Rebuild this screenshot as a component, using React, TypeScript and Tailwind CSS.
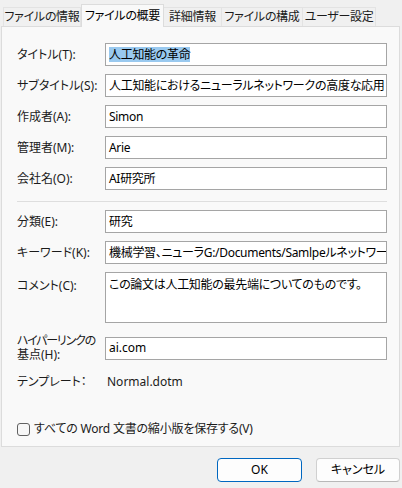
import React from "react";

const tabs = [
  { label: "ファイルの情報", w: "w-[78px]" },
  { label: "ファイルの概要", w: "w-[83px]", active: true },
  { label: "詳細情報", w: "w-[58px]" },
  { label: "ファイルの構成", w: "w-[81px]" },
  { label: "ユーザー設定", w: "w-[73px]" },
];

function Field({
  label,
  value,
  selected,
}: {
  label: string;
  value: string;
  selected?: boolean;
}) {
  return (
    <div className="grid grid-cols-[88px_282px] items-center">
      <div className="whitespace-nowrap text-[12px] leading-[16px] text-[#1b1b1b]">{label}</div>
      <div className="flex h-[23px] items-center overflow-hidden whitespace-nowrap border border-[#a5a5a5] bg-white px-[3px] text-[12px] tracking-[-0.3px] text-black">
        {selected ? (
          <span className="bg-[#99c9ef] leading-[15px]">{value}</span>
        ) : (
          <span className="leading-[16px]">{value}</span>
        )}
      </div>
    </div>
  );
}

export default function App() {
  return (
    <div className="h-[488px] w-[402px] overflow-hidden bg-[#f0f0f0] font-['Noto_Sans','Noto_Sans_CJK_JP',sans-serif] [font-feature-settings:'palt']">
      {/* tabs */}
      <div className="flex h-[26px] items-end pl-[3px]">
        {tabs.map((t) =>
          t.active ? (
            <div
              key={t.label}
              className={`${t.w} relative z-10 -mb-px flex h-[23px] items-center justify-center whitespace-nowrap border border-b-0 border-[#dcdcdc] bg-[#f9f9f9] text-[12px] tracking-[-0.3px] text-black`}
            >
              {t.label}
            </div>
          ) : (
            <div
              key={t.label}
              className={`${t.w} flex h-[19px] items-center justify-center whitespace-nowrap border border-b-0 border-l-0 border-[#e3e3e3] bg-[#f0f0f0] text-[12px] tracking-[-0.3px] text-[#1b1b1b] first:border-l`}
            >
              {t.label}
            </div>
          ),
        )}
      </div>

      {/* panel */}
      <div className="ml-px mr-[2px] box-border flex h-[421px] flex-col border border-[#dcdcdc] bg-[#f9f9f9] pl-[15px] pt-[16px]">
        <div className="flex flex-col gap-[8px]">
          <Field label="タイトル(T):" value="人工知能の革命" selected />
          <Field label="サブタイトル(S):" value="人工知能におけるニューラルネットワークの高度な応用と将来" />
          <Field label="作成者(A):" value="Simon" />
          <Field label="管理者(M):" value="Arie" />
          <Field label="会社名(O):" value="AI研究所" />
        </div>

        <div className="mt-[11px] h-px w-[370px] bg-[#dedede]" />

        <div className="mt-[8px] flex flex-col gap-[8px]">
          <Field label="分類(E):" value="研究" />
          <Field label="キーワード(K):" value="機械学習、ニューラG:/Documents/Samlpeルネットワーク" />
          <div className="grid grid-cols-[88px_282px] items-start">
            <div className="pt-[6px] text-[12px] leading-[16px] text-[#1b1b1b]">コメント(C):</div>
            <div className="h-[51px] overflow-hidden border border-[#a5a5a5] bg-white px-[3px] pt-[4px] text-[12px] leading-[16px] tracking-[-0.3px] text-black">
              この論文は人工知能の最先端についてのものです。
            </div>
          </div>
        </div>

        <div className="mt-[11px] grid grid-cols-[88px_282px] items-center">
          <div className="flex flex-col text-[12px] leading-[14px] text-[#1b1b1b]">
            <span className="whitespace-nowrap tracking-[-1.2px]">ハイパーリンクの</span>
            <span className="whitespace-nowrap">基点(H):</span>
          </div>
          <div className="flex h-[23px] items-center border border-[#a5a5a5] bg-white px-[3px] text-[12px] text-black">
            ai.com
          </div>
        </div>

        <div className="mt-[8px] grid h-[23px] grid-cols-[90px_280px] items-center text-[12px] text-[#1b1b1b]">
          <div>テンプレート：</div>
          <div>Normal.dotm</div>
        </div>

        <label className="mt-[28px] flex h-[16px] items-center gap-[4px] whitespace-nowrap text-[12px] tracking-[-0.2px] text-[#1b1b1b]">
          <span className="h-[13px] w-[13px] shrink-0 rounded-[3px] border border-[#616161] bg-[#f7f7f7]" />
          すべての Word 文書の縮小版を保存する(V)
        </label>
      </div>

      {/* buttons */}
      <div className="mt-[11px] flex justify-end gap-[14px] pr-[2px]">
        <button className="h-[24px] w-[85px] rounded-[4px] border border-[#0067c0] bg-[#fdfdfd] text-[12px] text-black">
          OK
        </button>
        <button className="h-[24px] w-[84px] rounded-[4px] border border-[#d0d0d0] border-b-[#b8b8b8] bg-[#fdfdfd] text-[12px] text-black">
          キャンセル
        </button>
      </div>
    </div>
  );
}
